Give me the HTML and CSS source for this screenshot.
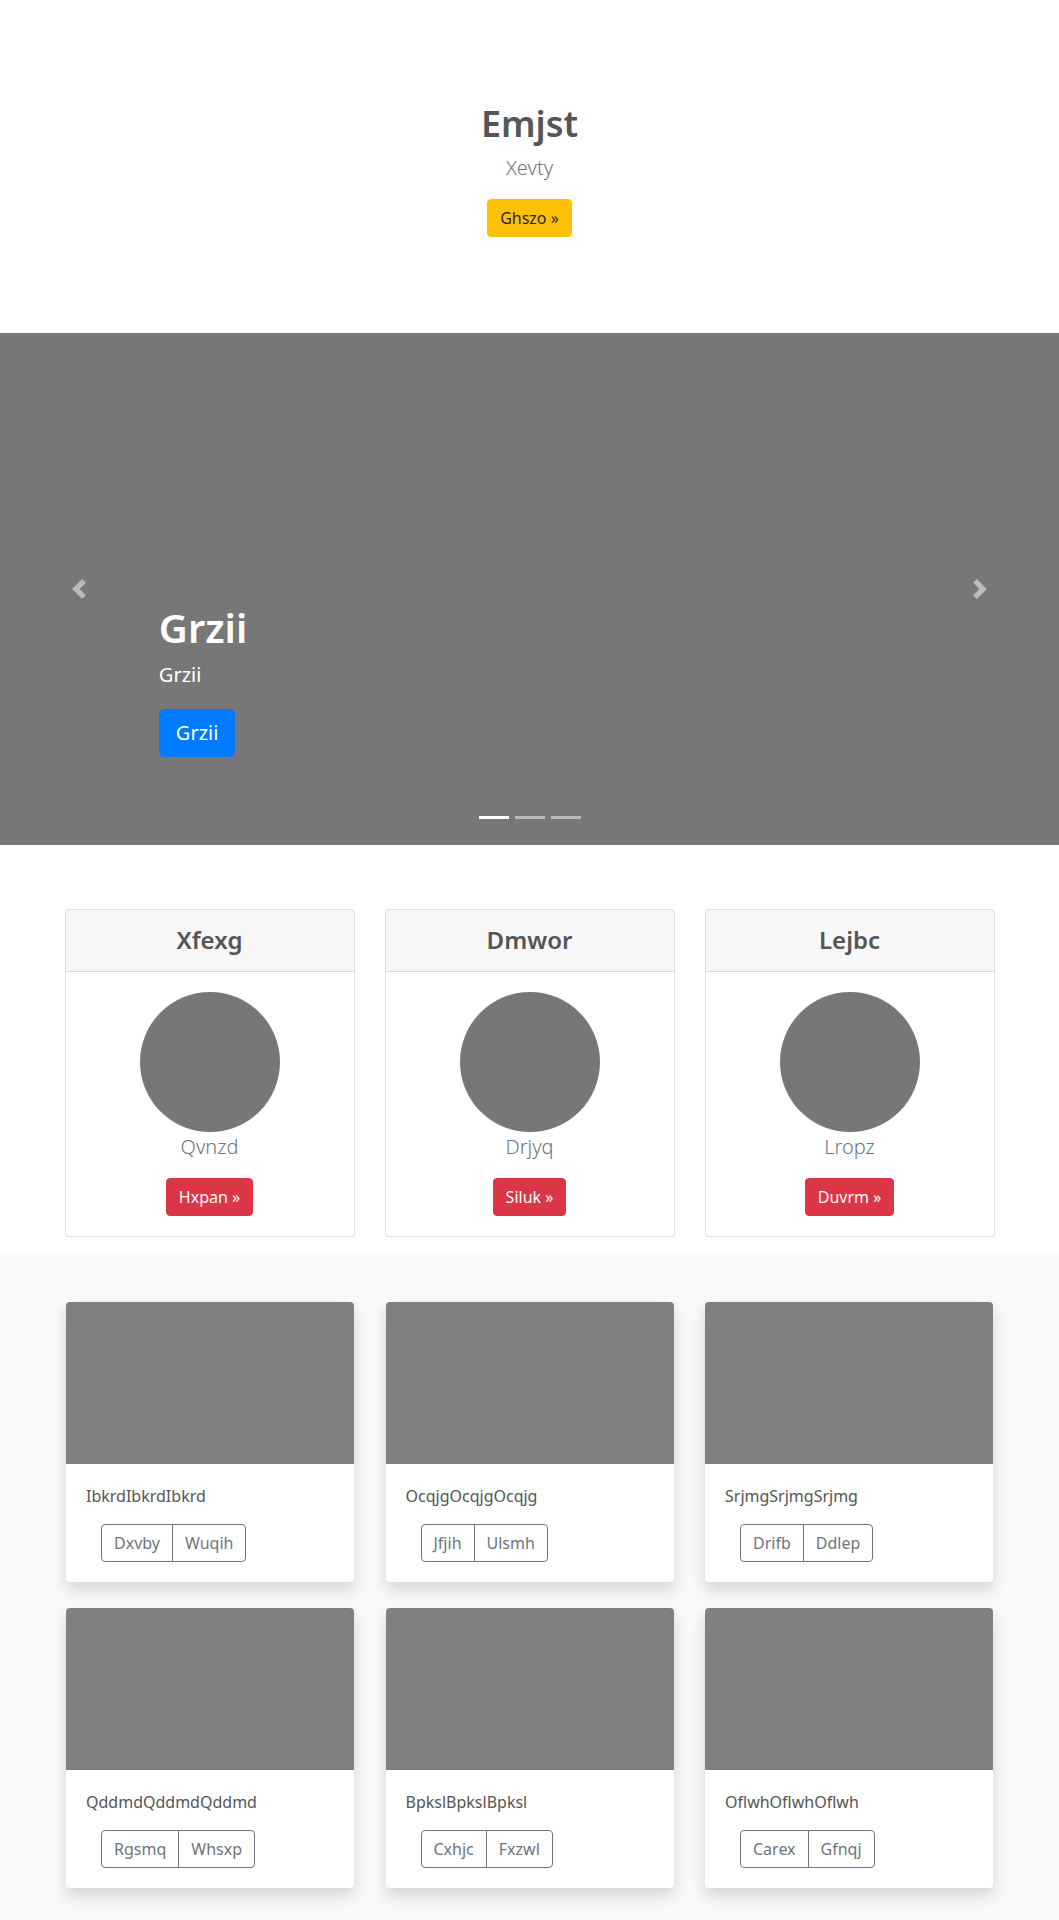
FILE: index.html
```html
<!DOCTYPE html>
<html lang="en">
<head>
<meta charset="utf-8">
<title>Emjst</title>
<link rel="stylesheet" href="styles.css">
</head>
<body>
<section class="hero">
  <h1 class="hero-title">Emjst</h1>
  <p class="hero-lead">Xevty</p>
  <a class="btn btn-warning" href="#">Ghszo &raquo;</a>
</section>

<div class="carousel">
  <ol class="indicators">
    <li class="active"></li>
    <li></li>
    <li></li>
  </ol>
  <div class="caption">
    <h1 class="caption-title">Grzii</h1>
    <p class="caption-text">Grzii</p>
    <a class="btn btn-primary btn-lg" href="#">Grzii</a>
  </div>
  <a class="control control-prev" href="#">
    <svg width="20" height="20" viewBox="0 0 8 8"><path fill="#fff" d="M5.25 0l-4 4 4 4 1.5-1.5L4.25 4l2.5-2.5L5.25 0z"/></svg>
  </a>
  <a class="control control-next" href="#">
    <svg width="20" height="20" viewBox="0 0 8 8"><path fill="#fff" d="M2.75 0l-1.5 1.5L3.75 4l-2.5 2.5L2.75 8l4-4-4-4z"/></svg>
  </a>
</div>

<section class="container pricing">
  <div class="card">
    <div class="card-header"><h4>Xfexg</h4></div>
    <div class="card-body">
      <div class="circle"></div>
      <p class="card-lead">Qvnzd</p>
      <a class="btn btn-danger" href="#">Hxpan &raquo;</a>
    </div>
  </div>
  <div class="card">
    <div class="card-header"><h4>Dmwor</h4></div>
    <div class="card-body">
      <div class="circle"></div>
      <p class="card-lead">Drjyq</p>
      <a class="btn btn-danger" href="#">Siluk &raquo;</a>
    </div>
  </div>
  <div class="card">
    <div class="card-header"><h4>Lejbc</h4></div>
    <div class="card-body">
      <div class="circle"></div>
      <p class="card-lead">Lropz</p>
      <a class="btn btn-danger" href="#">Duvrm &raquo;</a>
    </div>
  </div>
</section>

<section class="album">
  <div class="container album-grid">
    <div class="acard">
      <div class="thumb"></div>
      <div class="acard-body">
        <p class="acard-text">IbkrdIbkrdIbkrd</p>
        <div class="btn-group"><a class="btn btn-outline" href="#">Dxvby</a><a class="btn btn-outline" href="#">Wuqih</a></div>
      </div>
    </div>
    <div class="acard">
      <div class="thumb"></div>
      <div class="acard-body">
        <p class="acard-text">OcqjgOcqjgOcqjg</p>
        <div class="btn-group"><a class="btn btn-outline" href="#">Jfjih</a><a class="btn btn-outline" href="#">Ulsmh</a></div>
      </div>
    </div>
    <div class="acard">
      <div class="thumb"></div>
      <div class="acard-body">
        <p class="acard-text">SrjmgSrjmgSrjmg</p>
        <div class="btn-group"><a class="btn btn-outline" href="#">Drifb</a><a class="btn btn-outline" href="#">Ddlep</a></div>
      </div>
    </div>
    <div class="acard">
      <div class="thumb"></div>
      <div class="acard-body">
        <p class="acard-text">QddmdQddmdQddmd</p>
        <div class="btn-group"><a class="btn btn-outline" href="#">Rgsmq</a><a class="btn btn-outline" href="#">Whsxp</a></div>
      </div>
    </div>
    <div class="acard">
      <div class="thumb"></div>
      <div class="acard-body">
        <p class="acard-text">BpkslBpkslBpksl</p>
        <div class="btn-group"><a class="btn btn-outline" href="#">Cxhjc</a><a class="btn btn-outline" href="#">Fxzwl</a></div>
      </div>
    </div>
    <div class="acard">
      <div class="thumb"></div>
      <div class="acard-body">
        <p class="acard-text">OflwhOflwhOflwh</p>
        <div class="btn-group"><a class="btn btn-outline" href="#">Carex</a><a class="btn btn-outline" href="#">Gfnqj</a></div>
      </div>
    </div>
  </div>
</section>
</body>
</html>
```
FILE: styles.css
```css
* { box-sizing: border-box; }
html, body { margin: 0; padding: 0; }
body {
  font-family: "Noto Sans", "Open Sans", "Liberation Sans", sans-serif;
  font-size: 16px;
  line-height: 1.5;
  color: #555;
  background: #fff;
}
h1, h4, p { margin: 0; }

.btn {
  display: inline-block;
  font-size: 16px;
  line-height: 24px;
  padding: 6px 12px;
  border: 1px solid transparent;
  border-radius: 4px;
  text-decoration: none;
  font-weight: 400;
}
.btn-lg { font-size: 20px; line-height: 30px; padding: 8px 16px; border-radius: 5px; }
.btn-warning { background: #ffc107; border-color: #ffc107; color: #212529; }
.btn-primary { background: #007bff; border-color: #007bff; color: #fff; }
.btn-danger { background: #dc3545; border-color: #dc3545; color: #fff; }
.btn-outline { color: #6c757d; border-color: #6c757d; background: transparent; }

/* hero */
.hero {
  text-align: center;
  padding: 102px 0 96px;
}
.hero-title {
  font-size: 36px;
  line-height: 1.2;
  font-weight: 600;
  color: #555;
  margin-bottom: 8px;
}
.hero-lead {
  font-size: 20px;
  font-weight: 300;
  line-height: 30px;
  color: #6c757d;
  margin-bottom: 16px;
}

/* carousel */
.carousel {
  position: relative;
  height: 512px;
  background: #777;
  margin-bottom: 64px;
}
.caption {
  position: absolute;
  left: 15%;
  right: 15%;
  bottom: 48px;
  padding: 20px 0;
  color: #fff;
  z-index: 2;
}
.caption-title {
  font-size: 40px;
  line-height: 48px;
  font-weight: 600;
  margin-bottom: 8px;
}
.caption-text {
  font-size: 20px;
  line-height: 30px;
  margin-bottom: 19px;
}
.caption .btn { margin-bottom: 20px; }
.control {
  position: absolute;
  top: 0;
  bottom: 0;
  width: 15%;
  display: flex;
  align-items: center;
  justify-content: center;
  opacity: 0.5;
}
.control-prev { left: 0; }
.control-next { right: 0; }
.control svg { display: block; }
.indicators {
  position: absolute;
  left: 15%;
  right: 15%;
  bottom: 0;
  margin: 0 0 16px;
  padding: 0;
  list-style: none;
  display: flex;
  justify-content: center;
  z-index: 3;
}
.indicators li {
  width: 30px;
  height: 3px;
  box-sizing: content-box;
  margin: 0 3px;
  border-top: 10px solid transparent;
  border-bottom: 10px solid transparent;
  background: #fff;
  background-clip: padding-box;
  opacity: 0.5;
}
.indicators li.active { opacity: 1; }

/* containers */
.container {
  width: 960px;
  margin: 0 auto;
  padding: 0 15px;
}

/* pricing */
.pricing {
  display: grid;
  grid-template-columns: repeat(3, 1fr);
  column-gap: 30px;
  margin-bottom: 16px;
}
.card {
  border: 1px solid rgba(0,0,0,.125);
  border-radius: 4px;
  background: #fff;
  text-align: center;
  overflow: hidden;
}
.card-header {
  background: rgba(0,0,0,.03);
  border-bottom: 1px solid rgba(0,0,0,.125);
  padding: 16px 20px;
}
.card-header h4 {
  font-size: 24px;
  line-height: 1.2;
  font-weight: 600;
  color: #555;
}
.card-body { padding: 20px; }
.circle {
  width: 140px;
  height: 140px;
  border-radius: 50%;
  background: #777;
  margin: 0 auto;
}
.card-lead {
  font-size: 20px;
  line-height: 30px;
  font-weight: 300;
  color: #6c757d;
  margin-bottom: 16px;
}

/* album */
.album {
  background: #f8f9fa;
  padding: 49px 0 48px;
}
.album-grid {
  display: grid;
  grid-template-columns: repeat(3, 288px);
  column-gap: 31.5px;
  row-gap: 26px;
  padding-left: 16.5px;
}
.acard {
  background: #fff;
  border-radius: 4px;
  overflow: hidden;
  box-shadow: 0 8px 16px rgba(0,0,0,.15);
}
.thumb {
  height: 162px;
  background: #808080;
}
.acard-body { padding: 20px; }
.acard-text {
  font-size: 16px;
  line-height: 24px;
  color: #555;
  margin-bottom: 16px;
}
.btn-group {
  display: inline-flex;
  margin-left: 15px;
}
.btn-group .btn:first-child { border-top-right-radius: 0; border-bottom-right-radius: 0; }
.btn-group .btn + .btn { margin-left: -1px; border-top-left-radius: 0; border-bottom-left-radius: 0; }
```
